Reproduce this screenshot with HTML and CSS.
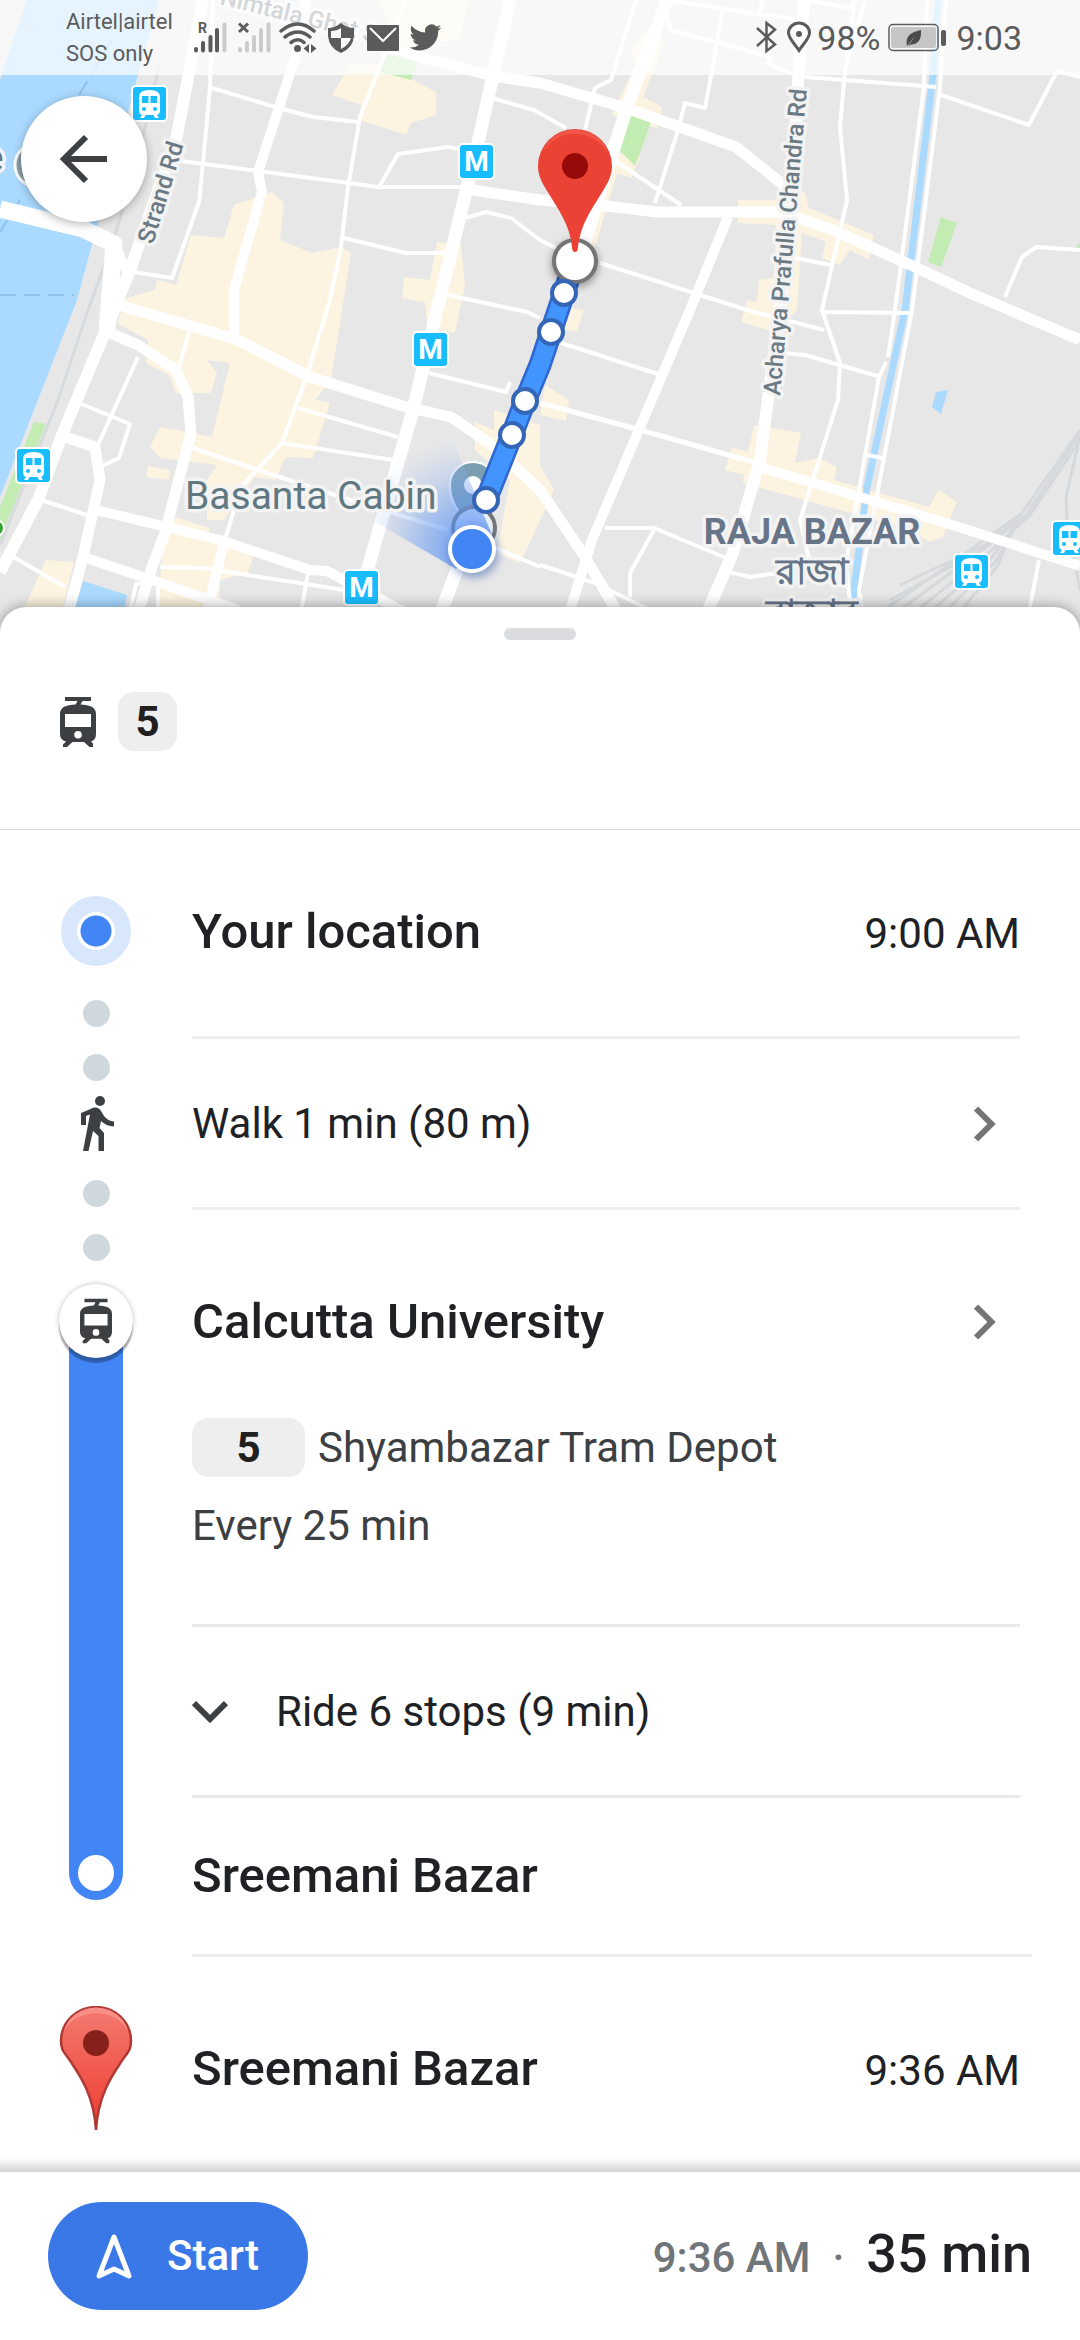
FILE: index.html
```html
<!DOCTYPE html>
<html lang="en">
<head>
<meta charset="utf-8">
<meta name="viewport" content="width=device-width, initial-scale=1">
<title>Transit directions</title>
<link rel="stylesheet" href="styles.css">
</head>
<body>
<svg class="defs" aria-hidden="true">
  <symbol id="tram" viewBox="0 0 36 50">
    <path fill="#3c4043" fill-rule="evenodd" d="M5 0H31V4H22.500L20.500 7.500C30 8 36 10 36 17V37Q36 43 31 44.500L33 46.500V50H29.500L24 45H12.500L7 50H3V47.500L6 44.500Q0 43 0 37V17C0 10 6 8 15.500 7.500L17.500 4H5ZM5 17V30H31V17ZM18 34A3.800 3.800 0 1 0 18 41.600A3.800 3.800 0 1 0 18 34Z"/>
  </symbol>
  <symbol id="chevron" viewBox="0 0 22 36">
    <path fill="none" stroke="#757575" stroke-width="6" d="M2 2.500L17.500 18L2 33.500"/>
  </symbol>
  <symbol id="station" viewBox="0 0 37 37">
    <rect width="37" height="37" rx="5" fill="#fff"/>
    <rect x="2" y="2" width="33" height="33" rx="3" fill="#18bdff"/>
    <path fill="#fff" d="M8 12Q8 5 18.500 5T29 12V25Q29 29 26 30L28 33H24L22.500 30H14.500L13 33H9L11 30Q8 29 8 25Z"/>
    <path fill="#18bdff" d="M11 11h6.500v7H11zM19.500 11H26v7h-6.500z"/>
    <circle cx="13" cy="24" r="2" fill="#18bdff"/><circle cx="24" cy="24" r="2" fill="#18bdff"/>
  </symbol>
  <symbol id="metro" viewBox="0 0 37 37">
    <rect width="37" height="37" rx="5" fill="#fff"/>
    <rect x="2" y="2" width="33" height="33" rx="3" fill="#18bdff"/>
    <text x="18.500" y="28" text-anchor="middle" class="metro-letter">M</text>
  </symbol>
</svg>

<main class="screen">
  <section class="map" aria-label="Map">
    <svg class="map-canvas" viewBox="0 0 1080 640" preserveAspectRatio="xMidYMin slice">
      <defs>
        <radialGradient id="beam" gradientUnits="userSpaceOnUse" cx="472" cy="549" r="116">
          <stop offset="0" stop-color="#4285f4" stop-opacity=".85"/>
          <stop offset=".5" stop-color="#6d9df2" stop-opacity=".45"/>
          <stop offset="1" stop-color="#b8cdf2" stop-opacity="0"/>
        </radialGradient>
        <filter id="soft" x="-50%" y="-50%" width="200%" height="200%"><feGaussianBlur stdDeviation="4"/></filter>
      </defs>
      <rect width="1080" height="640" fill="#e7e7e7"/>
      <g fill="#aadaff">
        <path d="M27 0H159L138 75L98 222L77 300L0 497V80Z"/>
        <path d="M83 581L127 595L118 640H66Z"/>
        <path d="M936 392L948 390L941 414L932 407Z"/>
      </g>
      <g fill="none" stroke="#8fc1ea" stroke-width="2">
        <path d="M0 295H74" stroke-dasharray="16 8"/>
        <path d="M112 40L70 110M20 200L0 232" stroke-dasharray="16 8"/>
      </g>
      <path d="M160 62L140 150L112 245L88 310L58 400L0 545" fill="none" stroke="#d6dadd" stroke-width="3"/>
      <g fill="#fcf4e0">
        <path d="M379 0H468L460 40L400 48Z"/>
        <path d="M351 63H382L413 80L436 92V115L411 123L406 135L360 120L361 105L332 95Z"/>
        <path d="M234 205L272 192L284 203L280 240L312 253L341 247L351 253L342 310L331 380L315 400L330 403L313 458L286 457L275 480L255 477L224 520H207V480L217 465L160 458L150 447L160 427L212 437L230 363L207 360L217 373L211 393H176L169 375L146 363L148 340L117 323L126 298L155 290L157 280L176 285L191 235L224 238Z"/>
        <path d="M437 242L461 245L465 285L455 333L427 327L425 302L402 298L404 277L430 280Z"/>
        <path d="M148 466L170 470L169 480L146 477Z"/>
        <path d="M175 517L210 528L207 537L255 550L248 573L220 580L218 640H155L163 545Z"/>
        <path d="M46 560L74 562L55 640H10Z"/>
        <path d="M494 410L540 425V465L554 490L546 508L520 563L497 553L510 480L475 450V422L494 430Z"/>
        <path d="M545 385L569 400L566 421L540 415Z"/>
        <path d="M566 307L584 310L577 331L562 330Z"/>
        <path d="M643 32L666 38L643 97L662 107L657 128L612 115L636 63L631 50Z"/>
        <path d="M609 140L619 153L640 157L631 178L617 173L595 247L580 240Z"/>
        <path d="M738 200H776L781 180L805 193L809 208L874 235L869 260L850 250L840 265L822 258L826 242L802 233L797 310L775 332L741 322L747 300L757 302L759 280L774 278L776 225L738 223Z"/>
        <path d="M754 425L801 433L795 463L819 458L837 467L834 480L929 507L939 490L957 502L943 537L929 542L912 530L743 483L744 475L725 470L732 447L748 452Z"/>
      </g>
      <g fill="#c3ecb2">
        <path d="M387 50L420 57L411 80L380 72Z"/>
        <path d="M34 422L46 424L0 540V507Z"/>
        <path d="M630 115L651 122L635 166L619 150Z"/>
        <path d="M941 217L957 223L941 267L928 262Z"/>
        <path d="M1080 242L1076 248H1080Z"/>
      </g>
      <g class="rail-lines">
        <path d="M1080 430L1022 513L970 550L884 610M1080 434L1026 515L975 555L900 610M1080 440L1030 515L985 556L915 612M1022 513L985 545L900 585M1018 522L990 560L930 612M1014 530L995 562L945 612M1010 536L998 565L960 612M1024 516L985 548L890 600"/>
        <path d="M1080 436L1066 497L1067 520L1080 590"/>
      </g>
      <path d="M938 0L933 75L905 310L867 487L850 620" fill="none" stroke="#aadaff" stroke-width="7"/>
      <g class="roads-minor">
        <path d="M213 0L210 87L203 163L199 202L172 278L134 272M212 88L275 107L313 117L358 122M182 161L379 187H462M379 187L398 154L448 147L465 150M406 0L360 117L348 187L341 247L330 300L306 378L282 443L241 487L224 543"/>
        <path d="M492 98L534 110L566 128M465 218L486 212L511 218L540 240L560 250M344 238L406 253H444M448 295L527 312L540 318"/>
        <path d="M138 357L98 445M79 403L130 424L119 458L102 466M189 332L179 367M41 500L93 517M10 555L65 587M160 567L203 568L344 590M308 573L301 612M298 408L398 437M282 443L393 460M193 448L258 470L344 498L448 530M496 548L540 567M429 373L506 392L510 382M158 582V612M130 612L136 584L158 582"/>
        <path d="M636 0L611 80L595 88L585 130M668 0L730 10L800 20M763 0L759 12M806 0L850 8L855 0L846 68M667 17L671 30L719 43L771 57L767 63L795 75M723 10L717 43L705 108L685 103L678 130L655 203M805 77L936 87M941 95L1029 125L1057 71L1080 77"/>
        <path d="M865 0L845 70L840 127L847 200L822 310L840 363L838 400L800 520L810 563M927 0L924 87L895 310L888 357M886 362L879 377L846 563L851 612M946 0L940 87L912 310L859 590L862 612M822 312L912 313M867 455L882 458"/>
        <path d="M1005 297L1022 257L1036 247L1080 250M614 160L681 205M600 263L747 310L824 330M561 343L661 375M774 352L805 355L881 377M605 528H654L726 558M654 530L630 573V597M729 572L750 577L778 573M540 565L595 583L654 612M1039 560L1029 612M795 258L831 265"/>
        <path d="M540 403L633 428L757 463" stroke-width="5"/>
      </g>
      <g class="roads-major">
        <path d="M203 0L176 140L130 270L108 325L62 435L38 500L0 572" stroke-width="12"/>
        <path d="M0 209L83 229L114 244L107 330" stroke-width="17"/>
        <path d="M114 240L128 276L106 330" stroke-width="9"/>
        <path d="M306 0L296 55L258 172L262 192L234 290V340" stroke-width="10"/>
        <path d="M510 0L477 147L437 310L413 410L366 575M458 567L438 620" stroke-width="13"/>
        <path d="M368 43L492 76L540 83L626 108L736 147L790 190"/>
        <path d="M472 190L540 200L598 205L657 212H781L833 230L915 267L970 293L1080 340"/>
        <path d="M119 305L238 340L310 377L406 407L451 417L489 443L540 490L585 557L622 620"/>
        <path d="M110 333L138 345L176 370L188 397L191 433L165 533L152 567L136 620"/>
        <path d="M65 437L95 447L100 480L83 557L66 620"/>
        <path d="M96 510L220 540L310 570L327 571L410 615M83 557L158 582L238 610M224 543L205 620" stroke-width="10"/>
        <path d="M667 0L626 110L574 277" stroke-width="13"/>
        <path d="M804 0L798 83L791 213L781 300L760 460L733 553L705 617" stroke-width="12"/>
        <path d="M728 217L690 310L592 540L568 617M760 467L860 497L946 523L1080 566" stroke-width="10"/>
      </g>
      <circle cx="-4" cy="528" r="8" fill="#34a335" stroke="#fff" stroke-width="2"/>
      <circle cx="37" cy="165" r="22" fill="#8ba0aa" stroke="#fff" stroke-width="3"/>

      <g class="map-labels">
        <text class="street" transform="translate(219 4) rotate(14)">Nimtala Ghat St</text>
        <text class="street" transform="translate(153 245) rotate(-73)">Strand Rd</text>
        <text class="street" transform="translate(780 396) rotate(-85)">Acharya Prafulla Chandra Rd</text>
        <text class="place" x="-17" y="171">e</text>
        <text class="district" x="812" y="544" text-anchor="middle">RAJA BAZAR</text>
        <text class="district" x="812" y="584" text-anchor="middle">রাজা</text>
        <text class="district" x="812" y="625" text-anchor="middle">বাজার</text>
      </g>
      <use href="#station" x="131" y="85" width="37" height="37"/>
      <use href="#station" x="15" y="447" width="37" height="37"/>
      <use href="#station" x="953" y="553" width="37" height="37"/>
      <use href="#station" x="1051" y="520" width="37" height="37"/>
      <use href="#metro" x="458" y="143" width="37" height="37"/>
      <use href="#metro" x="412" y="331" width="37" height="37"/>
      <use href="#metro" x="343" y="569" width="37" height="37"/>

      <path d="M473 534C468 518 450 510 450 485A23 23 0 0 1 496 485C496 510 478 518 473 534Z" fill="#7b9fb0" stroke="#fff" stroke-width="2"/>
      <circle cx="473" cy="485" r="9" fill="#fff"/>
      <circle cx="474" cy="528" r="21" fill="#e8f0fe" stroke="#757575" stroke-width="4"/>
      <path d="M456 569L372 520L390 466L452 438L492 535Z" fill="url(#beam)"/>
      <text class="place" x="185" y="509">Basanta Cabin</text>

      <path d="M570 275L551 332L540 365L525 401L512 435L486 500" fill="none" stroke="#2f67cf" stroke-width="23"/>
      <path d="M570 275L551 332L540 365L525 401L512 435L486 500" fill="none" stroke="#4294ff" stroke-width="18"/>
      <circle cx="575" cy="264" r="23" fill="#000" opacity=".4" filter="url(#soft)"/>
      <circle cx="575" cy="261" r="21" fill="#fff" stroke="#757575" stroke-width="4"/>
      <g fill="#fff" stroke="#3466b8" stroke-width="4">
        <circle cx="564" cy="293" r="12"/><circle cx="551" cy="332" r="12"/><circle cx="525" cy="401" r="12"/><circle cx="512" cy="435" r="12"/><circle cx="486" cy="500" r="12"/>
      </g>
      <path d="M575 252Q572 252 572 247C570 225 558 209 549 194C543 184 538 177 538 166A37 37 0 0 1 612 166C612 177 607 184 601 194C592 209 580 225 578 247Q578 252 575 252Z" fill="#ea4335"/>
      <path d="M542 153A35 35 0 0 1 608 153A38 38 0 0 0 542 153Z" fill="#f0574a"/>
      <circle cx="575" cy="166" r="13" fill="#960a0a"/>
      <circle cx="474" cy="553" r="25" fill="#3a5fae" opacity=".5" filter="url(#soft)"/>
      <circle cx="472" cy="549" r="22" fill="#4285f4" stroke="#fff" stroke-width="4"/>
    </svg>

    <div class="status-bar">
      <p class="carrier">Airtel|airtel<br>SOS only</p>
      <svg class="status-icons" width="250" height="36" viewBox="192 20 250 36" role="img" aria-label="Notifications">
        <g stroke-width="4" stroke-linecap="round" stroke="#5b5b5b">
          <path d="M196 49V50.500M203 43V50.500M210.500 37V50.500M217 30V50.500"/>
          <path d="M224.500 24.500V50.500M240 49V50.500M247 43V50.500M254 37V50.500M261 30V50.500M268.500 24.500V50.500" stroke="#cbcbcb"/>
        </g>
        <text x="198" y="33" class="roaming">R</text>
        <path d="M239 23.500L248 32M248 23.500L239 32" stroke="#5b5b5b" stroke-width="3"/>
        <g fill="none" stroke="#5b5b5b" stroke-width="3.500" stroke-linecap="round">
          <path d="M281 31Q298 17 314 31M285 37Q298 27 310 37M291 42.500Q298 37 304 42.500"/>
        </g>
        <circle cx="297.500" cy="48.500" r="3.500" fill="#5b5b5b"/>
        <path d="M309 44V53L303.500 48.500ZM311 44V53L316.500 48.500Z" fill="#5b5b5b"/>
        <path d="M341 23Q347 28 354 28V36Q353 48 341 53Q329 48 328 36V28Q335 28 341 23Z" fill="#5b5b5b"/>
        <path d="M341 28V38H331V31Q337 31 341 28ZM341 38H351Q349 45 341 49Z" fill="#fafafa"/>
        <rect x="367" y="25" width="32" height="26" rx="1" fill="#5b5b5b"/>
        <path d="M370 28L383 41L396 28" fill="none" stroke="#fff" stroke-width="2"/>
        <path transform="translate(409.500 21.500) scale(1.330)" fill="#5b5b5b" d="M23.950 4.570a10 10 0 0 1-2.820.77 4.960 4.960 0 0 0 2.160-2.720c-.95.550-2 .95-3.130 1.180a4.920 4.920 0 0 0-8.380 4.480C7.690 8.090 4.070 6.130 1.640 3.160a4.820 4.820 0 0 0-.67 2.480c0 1.710.87 3.210 2.190 4.100a4.900 4.900 0 0 1-2.230-.62v.06a4.920 4.920 0 0 0 3.950 4.830 5 5 0 0 1-2.210.08 4.940 4.940 0 0 0 4.600 3.420A9.870 9.870 0 0 1 0 19.540a13.990 13.990 0 0 0 7.560 2.210c9.050 0 14-7.500 14-13.980 0-.21 0-.42-.02-.63a9.940 9.940 0 0 0 2.460-2.550z"/>
      </svg>
      <div class="status-right">
        <svg width="60" height="36" viewBox="751 20 60 36" role="img" aria-label="Bluetooth and location on">
          <path d="M755 28L773 44.500L764.500 51V23L773 29.500L755 46" fill="none" stroke="#5b5b5b" stroke-width="2.500"/>
          <path d="M797 50.500C792 43 786.500 38 786.500 33A10.500 10 0 0 1 807.500 33C807.500 38 802 43 797 50.500Z" fill="none" stroke="#5b5b5b" stroke-width="3"/>
          <circle cx="797" cy="34" r="3" fill="#5b5b5b"/>
        </svg>
        <span class="battery-level">98%</span>
        <svg class="battery" width="58" height="30" viewBox="887 23 58 30" role="img" aria-label="Battery saver">
          <rect x="888" y="24.500" width="49" height="26" rx="4" fill="none" stroke="#5b5b5b" stroke-width="1.500"/>
          <rect x="890" y="27" width="45" height="21" rx="2" fill="#c6c6c6"/>
          <rect x="940" y="30" width="5" height="16" rx="2" fill="#5b5b5b"/>
          <path d="M906 46Q903 33 920 30Q921 44 910 44.500L907 46L915 35Z" fill="#4a4a4a"/>
        </svg>
        <time>9:03</time>
      </div>
    </div>
    <button class="back" type="button" aria-label="Back">
      <svg width="48" height="50" viewBox="0 0 48 50"><path d="M47 25H5M26 3L4 25L26 47" fill="none" stroke="#3c4043" stroke-width="6"/></svg>
    </button>
  </section>

  <section class="sheet">
    <header class="summary">
      <span class="handle"></span>
      <div class="summary-line">
        <svg width="36" height="50" role="img" aria-label="Tram"><use href="#tram"/></svg>
        <span class="line-badge">5</span>
      </div>
    </header>

    <ol class="steps">
      <li class="step">
        <div class="rail rail-origin">
          <span class="origin-dot"></span>
          <span class="dot"></span>
        </div>
        <div class="content origin">
          <h2>Your location</h2>
          <time>9:00 AM</time>
        </div>
      </li>
      <li class="step">
        <div class="rail rail-walk">
          <span class="dot"></span>
          <svg class="walk-icon" width="36" height="56" viewBox="0 0 36 56" role="img" aria-label="Walk">
            <circle cx="22" cy="5" r="5" fill="#3c4043"/>
            <path fill="#3c4043" d="M3 17L16 11.500Q21 11 23 15L26 20Q30 25 36 25.500V30.500Q28 30 23 25L21.500 32L26 37V55H20.500V40L15 35L10.500 55H5L12 18.500L8 20V29H3Z"/>
          </svg>
          <span class="dot"></span>
        </div>
        <button class="content row-button" type="button">
          <span>Walk 1 min (80 m)</span>
          <svg class="chevron" width="22" height="36"><use href="#chevron"/></svg>
        </button>
      </li>
      <li class="step">
        <div class="rail rail-ride">
          <span class="dot"></span>
          <span class="transit-stop"><svg width="32" height="46"><use href="#tram"/></svg></span>
          <span class="line-bar"><span class="line-end"></span></span>
        </div>
        <div class="leg">
          <div class="content boarding">
            <button class="station-button" type="button">
              <span class="station-name">Calcutta University</span>
              <svg class="chevron" width="22" height="36"><use href="#chevron"/></svg>
            </button>
            <p class="headsign"><span class="line-badge line-badge-wide">5</span>Shyambazar Tram Depot</p>
            <p class="frequency">Every 25 min</p>
          </div>
          <button class="content row-button stops-button" type="button" aria-expanded="false">
            <svg width="36" height="24" viewBox="0 0 36 24"><path d="M2 3L18 19L34 3" fill="none" stroke="#3c4043" stroke-width="6"/></svg>
            <span>Ride 6 stops (9 min)</span>
          </button>
          <div class="content alighting"><h2>Sreemani Bazar</h2></div>
        </div>
      </li>
      <li class="step">
        <div class="rail rail-destination">
          <svg width="74" height="126" viewBox="0 0 74 126" role="img" aria-label="Destination">
            <defs><linearGradient id="pin" x1="0" y1="0" x2="0" y2="1"><stop offset="0" stop-color="#f47a70"/><stop offset="1" stop-color="#ee3b30"/></linearGradient></defs>
            <path d="M37 124C35 90 22 71 12 56C5 46 2 44 2 35A35 34 0 0 1 72 35C72 44 69 46 62 56C52 71 39 90 37 124Z" fill="url(#pin)" stroke="#b03a33" stroke-width="2.500"/>
            <path d="M5 25A33 31 0 0 1 69 25A35 30 0 0 0 5 25Z" fill="#f88e86"/>
            <circle cx="37" cy="37" r="13" fill="#85201a"/>
          </svg>
        </div>
        <div class="content destination">
          <h2>Sreemani Bazar</h2>
          <time>9:36 AM</time>
        </div>
      </li>
    </ol>
  </section>

  <footer class="trip-bar">
    <button class="start" type="button">
      <svg width="38" height="50" viewBox="0 0 38 50"><path d="M19 6L34 45L19 38L4 45Z" fill="none" stroke="#fff" stroke-width="5" stroke-linejoin="round"/></svg>
      Start
    </button>
    <p class="trip-time"><span class="arrival">9:36 AM</span><span class="separator">·</span><strong>35 min</strong></p>
  </footer>
</main>
</body>
</html>
```

FILE: styles.css
```css
* {
  box-sizing: border-box;
}

body {
  margin: 0;
  background: #fff;
  color: #202124;
  font-family: Roboto, "Noto Sans", sans-serif;
  font-size: 42px;
  line-height: 48px;
}

h2,
p,
ol {
  margin: 0;
  padding: 0;
}

h2,
.station-name {
  font-size: 49px;
  font-weight: 500;
  line-height: 56px;
}

button {
  border: 0;
  padding: 0;
  background: none;
  color: inherit;
  font: inherit;
  text-align: left;
  cursor: pointer;
}

svg {
  display: block;
  flex: none;
}

.defs {
  position: absolute;
  width: 0;
  height: 0;
}

.screen {
  display: flex;
  flex-direction: column;
  min-height: 100vh;
}

/* Map */
.map {
  position: relative;
  overflow: hidden;
}

.map-canvas {
  width: 100%;
  height: 640px;
}

.roads-minor,
.roads-major,
.rail-lines {
  fill: none;
  stroke: #fff;
  stroke-width: 4px;
  stroke-linejoin: round;
}

.roads-major {
  stroke-width: 11px;
}

.rail-lines {
  stroke: #d5d9dc;
  stroke-width: 3px;
}

.map-labels text,
.place {
  paint-order: stroke;
  stroke: #f3f3f3;
  stroke-width: 7px;
  stroke-linejoin: round;
}

.street {
  fill: #6b7a84;
  font-size: 24px;
  font-weight: 500;
}

.place {
  fill: #5f7882;
  font-size: 39px;
}

.district {
  fill: #687588;
  font-size: 36px;
  font-weight: 700;
}

.metro-letter {
  fill: #fff;
  font-size: 28px;
  font-weight: 700;
}

.status-bar {
  position: absolute;
  inset: 0 0 auto;
  display: flex;
  align-items: center;
  height: 75px;
  padding: 0 58px 0 66px;
  background: rgba(255, 255, 255, 0.7);
  color: #5b5b5b;
  font-size: 34px;
}

.carrier {
  width: 126px;
  font-size: 22px;
  line-height: 32px;
}

.roaming {
  fill: #5b5b5b;
  font-size: 14px;
  font-weight: 700;
}

.status-right {
  display: flex;
  align-items: center;
  margin-left: auto;
}

.battery-level {
  margin: 0 8px 0 4px;
}

.battery {
  margin-right: 10px;
}

.back {
  position: absolute;
  top: 96px;
  left: 21px;
  display: grid;
  place-items: center;
  width: 126px;
  height: 126px;
  border-radius: 50%;
  background: #fff;
  box-shadow: 0 2px 10px rgba(0, 0, 0, 0.3);
}

/* Sheet */
.sheet {
  position: relative;
  flex: 1;
  margin-top: -33px;
  border-radius: 26px 26px 0 0;
  background: #fff;
  box-shadow: 0 0 14px rgba(0, 0, 0, 0.4);
}

.summary {
  display: flex;
  flex-direction: column;
  gap: 52px;
  padding: 21px 58px 78px;
  border-bottom: 1px solid #dadce0;
}

.handle {
  align-self: center;
  width: 72px;
  height: 12px;
  border-radius: 6px;
  background: #dadce0;
}

.summary-line {
  display: flex;
  align-items: center;
  gap: 22px;
  padding-left: 2px;
}

.line-badge {
  display: inline-grid;
  place-items: center;
  width: 59px;
  height: 59px;
  border-radius: 16px;
  background: #eee;
  color: #202020;
  font-weight: 700;
}

.line-badge-wide {
  width: 113px;
}

.steps {
  list-style: none;
}

.step {
  display: grid;
  grid-template-columns: 192px 1fr;
}

.rail {
  display: flex;
  flex-direction: column;
  align-items: center;
}

.rail-origin {
  gap: 34px;
  padding-top: 66px;
}

.rail-walk {
  padding: 15px 0 3px;
}

.walk-icon {
  margin: 15px 0 28px;
}

.rail-ride {
  padding-top: 24px;
}

.rail-destination {
  padding-top: 49px;
}

.dot {
  width: 27px;
  height: 27px;
  border-radius: 50%;
  background: #cfd8dc;
}

.origin-dot {
  width: 70px;
  height: 70px;
  border: 16px solid #d9e7fd;
  border-radius: 50%;
  background: radial-gradient(circle, #4285f4 15px, #fff 16px);
}

.transit-stop {
  z-index: 1;
  display: grid;
  place-items: center;
  width: 74px;
  height: 74px;
  margin-top: 23px;
  border-radius: 50%;
  background: #fff;
  box-shadow: 0 5px 1px rgba(0, 0, 0, 0.28), 0 0 5px rgba(0, 0, 0, 0.25);
}

.line-bar {
  display: flex;
  flex: 1;
  align-items: flex-end;
  justify-content: center;
  width: 54px;
  margin: -37px 0 57px;
  padding-bottom: 9px;
  border-radius: 0 0 27px 27px;
  background: #4285f4;
}

.line-end {
  width: 36px;
  height: 36px;
  border-radius: 50%;
  background: #fff;
}

.content {
  margin-right: 60px;
  border-bottom: 3px solid #eee;
}

.origin,
.destination {
  display: flex;
  align-items: baseline;
  justify-content: space-between;
  padding: 74px 0 76px;
}

.destination {
  padding: 84px 0 75px;
  border-bottom: 0;
}

.row-button {
  display: flex;
  align-items: center;
  justify-content: space-between;
  height: 171px;
  padding-top: 2px;
}

.chevron {
  margin-right: 24px;
}

.leg {
  display: flex;
  flex-direction: column;
}

.boarding {
  padding: 84px 0 74px;
  border-color: #e8eaed;
  color: #3c4043;
}

.station-button {
  display: flex;
  align-items: center;
  justify-content: space-between;
  width: 100%;
  color: #202124;
}

.headsign {
  display: flex;
  align-items: center;
  gap: 13px;
  margin: 68px 0 25px;
}

.stops-button {
  justify-content: flex-start;
  gap: 48px;
  border-color: #e8eaed;
}

.alighting {
  margin-right: 48px;
  padding: 50px 0;
}

/* Trip bar */
.trip-bar {
  position: relative;
  display: flex;
  align-items: center;
  justify-content: space-between;
  padding: 30px 48px;
  background: #fff;
}

.trip-bar::before {
  content: "";
  position: absolute;
  inset: -14px 0 auto;
  height: 14px;
  background: linear-gradient(rgba(0, 0, 0, 0), rgba(0, 0, 0, 0.17));
}

.start {
  display: flex;
  align-items: center;
  gap: 34px;
  height: 108px;
  padding: 0 49px 0 47px;
  border-radius: 54px;
  background: #3b78e7;
  color: #fff;
  font-weight: 500;
}

.trip-time {
  display: flex;
  align-items: baseline;
}

.arrival,
.separator {
  color: #70757a;
  font-weight: 500;
}

.separator {
  margin: 0 22px;
}

.trip-time strong {
  font-size: 54px;
  font-weight: 500;
}
```
